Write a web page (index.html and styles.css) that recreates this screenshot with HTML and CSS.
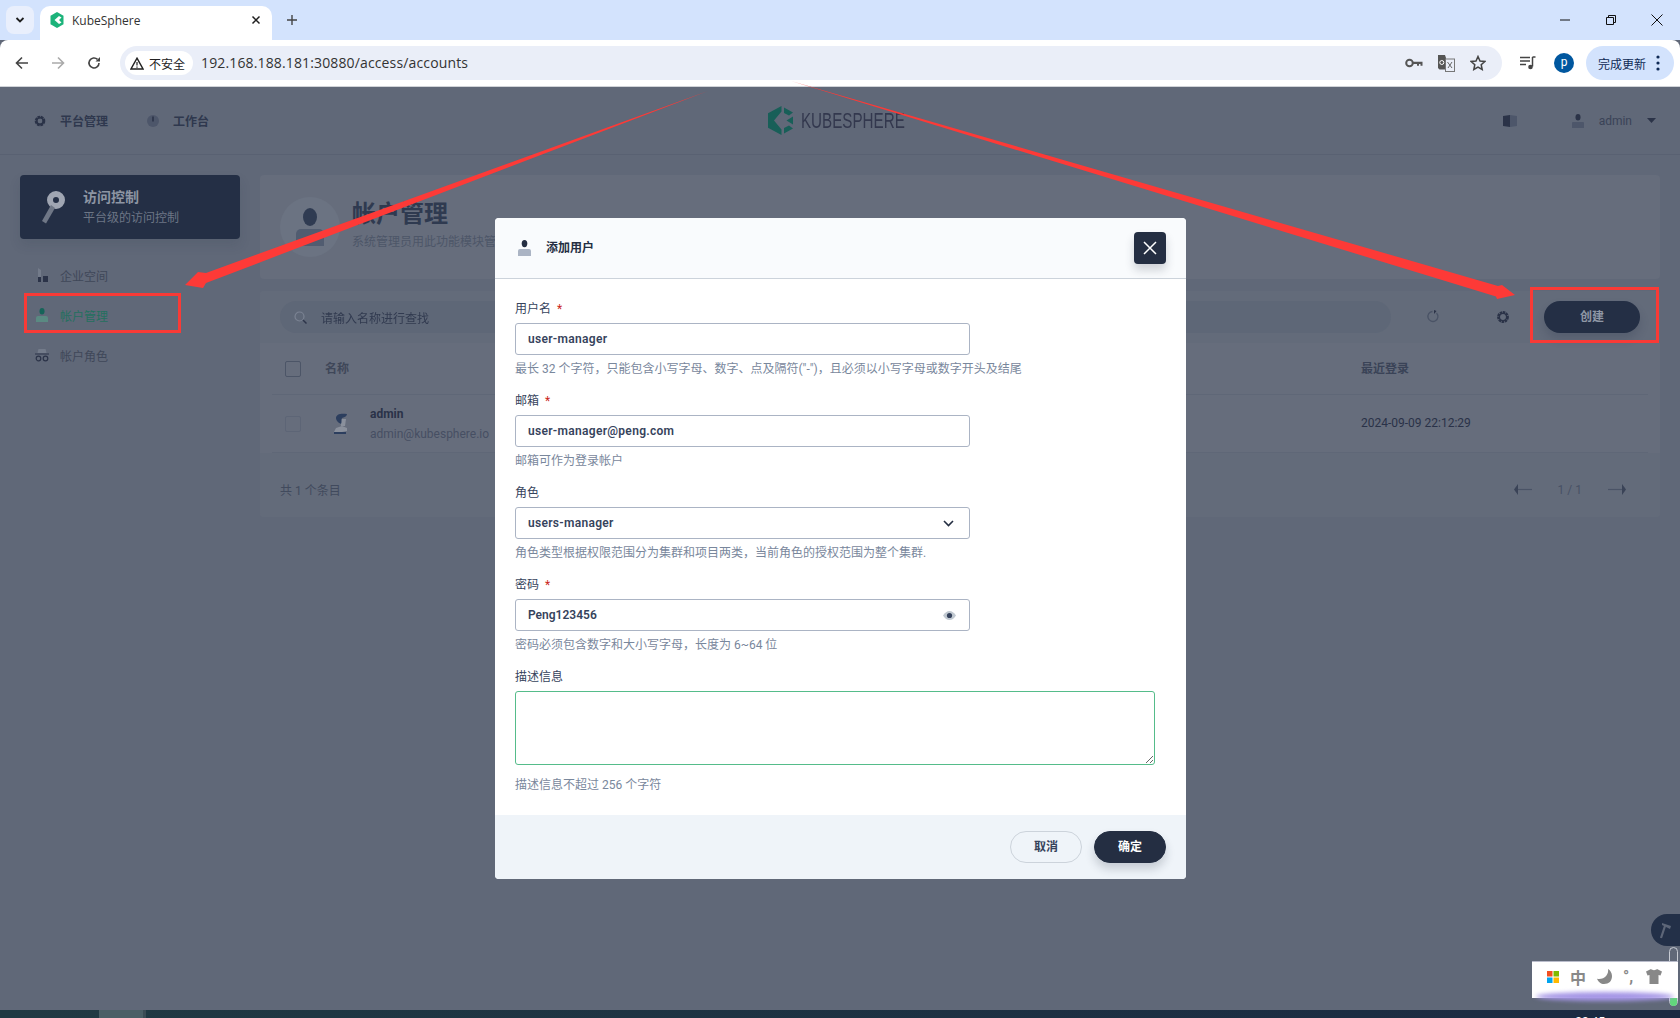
FILE: index.html
```html
<!DOCTYPE html>
<html lang="zh">
<head>
    <meta charset="UTF-8">
    <meta name="viewport" content="width=device-width, initial-scale=1.0">
    <title>KubeSphere</title>
    <link rel="stylesheet" href="styles.css">
</head>
<body>
    <!-- 浏览器外壳 -->
    <div class="tabstrip">
        <div class="tab-list-btn">
            <svg width="12" height="12" viewBox="0 0 12 12"><path d="M2.5 4l3.5 3.5L9.500 4" fill="none" stroke="#1f1f1f" stroke-width="1.800"/></svg>
        </div>
        <div class="tab">
            <svg class="tab-icon" width="14" height="16" viewBox="0 0 14 16"><path d="M7 0l6.500 3.800v8.400L7 16 .5 12.200V3.800z" fill="#1cb37a"/><path d="M9 4L4.500 8 9 12l2.500-1.500L9 8l2.500-2.500z" fill="#fff"/></svg>
            <span class="tab-title">KubeSphere</span>
            <svg class="tab-close" width="10" height="10" viewBox="0 0 10 10"><path d="M1.500 1.500l7 7M8.500 1.500l-7 7" stroke="#1f1f1f" stroke-width="1.500"/></svg>
        </div>
        <svg class="tab-new" width="12" height="12" viewBox="0 0 12 12"><path d="M6 1v10M1 6h10" stroke="#444" stroke-width="1.400"/></svg>
        <div class="window-controls">
            <svg width="12" height="12" viewBox="0 0 12 12"><path d="M1 6h10" stroke="#111" stroke-width="1"/></svg>
            <svg width="12" height="12" viewBox="0 0 12 12"><path d="M1.500 3.500h7v7h-7zM3.500 3.500v-2h7v7h-2" fill="none" stroke="#111" stroke-width="1"/></svg>
            <svg width="12" height="12" viewBox="0 0 12 12"><path d="M.5.5l11 11M11.500.5l-11 11" stroke="#111" stroke-width="1"/></svg>
        </div>
    </div>

    <div class="toolbar">
        <div class="nav-buttons">
            <svg width="14" height="14" viewBox="0 0 14 14"><path d="M13 7H2M7 1.500L1.500 7 7 12.500" fill="none" stroke="#444" stroke-width="1.600"/></svg>
            <svg width="14" height="14" viewBox="0 0 14 14"><path d="M1 7h11M7 1.500L12.500 7 7 12.500" fill="none" stroke="#aaa" stroke-width="1.600"/></svg>
            <svg width="14" height="14" viewBox="0 0 14 14"><path d="M12 7a5 5 0 1 1-1.500-3.600" fill="none" stroke="#444" stroke-width="1.600"/><path d="M13 1v4.500H8.500z" fill="#444"/></svg>
        </div>
        <div class="omnibox">
            <div class="chip">
                <svg width="14" height="13" viewBox="0 0 14 13"><path d="M7 1.200L13 12H1z" fill="none" stroke="#222" stroke-width="1.400"/><path d="M7 5v3.500M7 9.500v1.200" stroke="#222" stroke-width="1.200"/></svg>
                <span>不安全</span>
            </div>
            <span class="url">192.168.188.181:30880/access/accounts</span>
            <div class="omni-icons">
                <svg width="18" height="12" viewBox="0 0 18 12"><circle cx="4.500" cy="6" r="3.300" fill="none" stroke="#555" stroke-width="2"/><path d="M8 4.800h9.500v4h-2V7h-1.500v1.800h-2V7H8z" fill="#555"/></svg>
                <svg width="17" height="18" viewBox="0 0 17 18"><path d="M0 1h7l1 3v11.500H1.500L0 14z" fill="#555"/><rect x="7.500" y="5" width="9" height="12.500" fill="#eaeef8" stroke="#777"/><path d="M9.500 8l4.500 6M14 8l-4 6" stroke="#666"/><circle cx="3.800" cy="8.500" r="2" fill="none" stroke="#fff"/></svg>
                <svg width="16" height="16" viewBox="0 0 16 16"><path d="M8 1.500l2 4.500 4.800.5-3.600 3.200 1 4.800L8 12.100l-4.200 2.400 1-4.800L1.200 6.500 6 6z" fill="none" stroke="#444" stroke-width="1.500"/></svg>
            </div>
        </div>
        <svg class="media-icon" width="16" height="14" viewBox="0 0 16 14"><path d="M0 1.500h10M0 5h10M0 8.500h6" stroke="#444" stroke-width="1.500"/><path d="M12.500 1v9.500" stroke="#444" stroke-width="1.500"/><path d="M12.500 1H15.500" stroke="#444" stroke-width="1.500"/><circle cx="10.500" cy="11" r="2.300" fill="#444"/></svg>
        <div class="profile">p</div>
        <div class="update-pill">
            <span>完成更新</span>
            <svg width="4" height="16" viewBox="0 0 4 16"><circle cx="2" cy="2" r="1.600" fill="#0f2a55"/><circle cx="2" cy="8" r="1.600" fill="#0f2a55"/><circle cx="2" cy="14" r="1.600" fill="#0f2a55"/></svg>
        </div>
    </div>

    <!-- 页面（被遮罩压暗） -->
    <div class="page">
        <header class="app-header">
            <nav class="top-nav">
                <a class="top-link">
                    <svg width="14" height="14" viewBox="0 0 14 14"><circle cx="7" cy="7" r="4" fill="none" stroke="#2b3348" stroke-width="2.600" stroke-dasharray="2.600 .6"/><circle cx="7" cy="7" r="3.200" fill="none" stroke="#2b3348" stroke-width="1.500"/></svg>
                    <span>平台管理</span>
                </a>
                <a class="top-link">
                    <svg width="14" height="14" viewBox="0 0 14 14"><circle cx="7" cy="7" r="6" fill="#4d566a"/><path d="M7 2.500v5" stroke="#2b3348" stroke-width="1.600"/></svg>
                    <span>工作台</span>
                </a>
            </nav>
            <div class="logo">
                <svg width="26" height="29" viewBox="0 0 26 29"><path d="M13.500 0L0 7.300v14.400L13.500 29v-5.500L6 14.500l7.500-9z" fill="#185f58"/><path d="M16 1.500l9 5-4 3-5-2.500zM25 10.500v8l-6.500-4zM16 27.500l9-5-4-3-5 2.500z" fill="#185f58"/></svg>
                <span class="logo-text">KUBESPHERE</span>
            </div>
            <div class="top-right">
                <svg class="book-icon" width="14" height="12" viewBox="0 0 14 12"><path d="M0 1l7 -1v12l-7-1z" fill="#2b3348"/><path d="M7 0l7 1v10l-7 1z" fill="#4d566a"/></svg>
                <svg width="12" height="14" viewBox="0 0 12 14"><ellipse cx="6" cy="3.200" rx="2.500" ry="3.200" fill="#2b3348"/><path d="M1 8h10a1 1 0 0 1 1 1v5H0V9a1 1 0 0 1 1-1z" fill="#4d566a"/></svg>
                <span class="user-name">admin</span>
                <svg class="caret" width="9" height="5" viewBox="0 0 9 5"><path d="M0 0h9L4.500 5z" fill="#2b3348"/></svg>
            </div>
        </header>

        <div class="main">
            <aside class="sidebar">
                <div class="side-card">
                    <svg width="24" height="33" viewBox="0 0 24 33"><circle cx="15" cy="9" r="6" fill="none" stroke="#a0a6b2" stroke-width="6"/><path d="M10 14l4 3L5 32.500l-4-2.500z" fill="#6f7786"/></svg>
                    <div>
                        <div class="side-title">访问控制</div>
                        <div class="side-sub">平台级的访问控制</div>
                    </div>
                </div>
                <ul class="side-menu">
                    <li>
                        <svg width="14" height="14" viewBox="0 0 14 14"><path d="M3 0l3 2v12H3z" fill="#737b8a"/><rect x="3" y="9" width="3" height="5" fill="#2b3348"/><rect x="8" y="8" width="5" height="6" fill="#2b3348"/></svg>
                        <span>企业空间</span>
                    </li>
                    <li class="active">
                        <svg width="12" height="14" viewBox="0 0 12 14"><ellipse cx="6" cy="3.200" rx="2.500" ry="3.200" fill="#166459"/><path d="M2 8h8a2 2 0 0 1 2 2v4H0v-4a2 2 0 0 1 2-2z" fill="#5a8a82"/></svg>
                        <span>帐户管理</span>
                    </li>
                    <li>
                        <svg width="14" height="13" viewBox="0 0 14 13"><path d="M3.500 0h7l1 4h-9z" fill="#737b8a"/><path d="M0 5h14" stroke="#2b3348"/><circle cx="3.500" cy="9.500" r="2.300" fill="none" stroke="#2b3348" stroke-width="1.200"/><circle cx="10.500" cy="9.500" r="2.300" fill="none" stroke="#2b3348" stroke-width="1.200"/></svg>
                        <span>帐户角色</span>
                    </li>
                </ul>
            </aside>

            <section class="content">
                <div class="banner">
                    <div class="banner-icon">
                        <svg width="28" height="38" viewBox="0 0 28 38"><ellipse cx="14" cy="9" rx="7" ry="9" fill="#2f3b52"/><path d="M5 21h18a5 5 0 0 1 5 5v12H0V26a5 5 0 0 1 5-5z" fill="#515c70"/></svg>
                    </div>
                    <div>
                        <h1>帐户管理</h1>
                        <p>系统管理员用此功能模块管</p>
                    </div>
                </div>

                <div class="table-card">
                    <div class="table-toolbar">
                        <div class="search">
                            <svg width="13" height="13" viewBox="0 0 13 13"><circle cx="5.500" cy="5.500" r="4.500" fill="none" stroke="#7d8595" stroke-width="1.200"/><path d="M9 9l3.500 3.500" stroke="#2b3348" stroke-width="1.500"/></svg>
                            <span>请输入名称进行查找</span>
                        </div>
                        <svg class="tool-refresh" width="14" height="14" viewBox="0 0 14 14"><path d="M10.500 3a5 5 0 1 1-4-1.500" fill="none" stroke="#4a5366" stroke-width="1.300"/><path d="M8 0v4l2.500-3z" fill="#2b3348"/></svg>
                        <svg class="tool-gear" width="14" height="14" viewBox="0 0 14 14"><circle cx="7" cy="7" r="4.600" fill="none" stroke="#2b3348" stroke-width="2.600" stroke-dasharray="2.400 .6"/><circle cx="7" cy="7" r="3.600" fill="none" stroke="#2b3348" stroke-width="1.300"/></svg>
                        <div class="create-btn">创建</div>
                    </div>
                    <div class="table-head">
                        <span class="checkbox"></span>
                        <span class="col-name">名称</span>
                        <span class="col-login">最近登录</span>
                    </div>
                    <div class="table-row">
                        <span class="checkbox faint"></span>
                        <svg class="row-avatar" width="16" height="21" viewBox="0 0 16 21"><path d="M7 6h6l-1 7H8z" fill="#8a909c"/><path d="M3 15l6-2 5 2v3l-5 1H1z" fill="#8a909c"/><path d="M3 5C3 1 8 0 14 1c0 2-2 3-5 4-1 2 0 4-1 6-2-1-5-3-5-6z" fill="#2c3e5e"/><path d="M1 19h12v2H1z" fill="#2c3e5e"/></svg>
                        <div class="user-cell">
                            <div class="user-cell-name">admin</div>
                            <div class="user-cell-mail">admin@kubesphere.io</div>
                        </div>
                        <span class="col-login date">2024-09-09 22:12:29</span>
                    </div>
                    <div class="table-foot">
                        <span>共 1 个条目</span>
                        <div class="pager">
                            <svg width="18" height="11" viewBox="0 0 18 11"><path d="M4 5.500h14" stroke="#4a5366" stroke-width="1.200"/><path d="M4 0v11L0 5.500z" fill="#3a4357"/></svg>
                            <span>1 / 1</span>
                            <svg width="18" height="11" viewBox="0 0 18 11"><path d="M0 5.500h14" stroke="#4a5366" stroke-width="1.200"/><path d="M14 0v11l4-5.500z" fill="#3a4357"/></svg>
                        </div>
                    </div>
                </div>
            </section>
        </div>
    </div>

    <div class="taskbar">
        <div class="task-item"></div>
        <span class="task-clock">22:45</span>
    </div>

    <!-- 添加用户弹窗 -->
    <div class="modal">
        <div class="modal-header">
            <svg width="13" height="16" viewBox="0 0 13 16"><ellipse cx="6.500" cy="3.600" rx="2.800" ry="3.600" fill="#242e42"/><path d="M2 9h9a2 2 0 0 1 2 2v5H0v-5a2 2 0 0 1 2-2z" fill="#abb4c4"/></svg>
            <span class="modal-title">添加用户</span>
            <div class="modal-close">
                <svg width="14" height="14" viewBox="0 0 14 14"><path d="M1 1l12 12M13 1L1 13" stroke="#fff" stroke-width="1.500"/></svg>
            </div>
        </div>
        <form class="modal-body">
            <div class="form-item">
                <label>用户名<em>*</em></label>
                <input class="field" type="text" value="user-manager">
                <p class="hint">最长 32 个字符，只能包含小写字母、数字、点及隔符("-")，且必须以小写字母或数字开头及结尾</p>
            </div>
            <div class="form-item">
                <label>邮箱<em>*</em></label>
                <input class="field" type="text" value="user-manager@peng.com">
                <p class="hint">邮箱可作为登录帐户</p>
            </div>
            <div class="form-item">
                <label>角色</label>
                <div class="field select">
                    <span>users-manager</span>
                    <svg class="chevron" width="11" height="7" viewBox="0 0 11 7"><path d="M1 1l4.500 4.500L10 1" fill="none" stroke="#242e42" stroke-width="1.600"/></svg>
                </div>
                <p class="hint">角色类型根据权限范围分为集群和项目两类，当前角色的授权范围为整个集群.</p>
            </div>
            <div class="form-item">
                <label>密码<em>*</em></label>
                <div class="field select password">
                    <span>Peng123456</span>
                    <svg width="13" height="9" viewBox="0 0 13 9"><path d="M0 4.500C2 1.500 4 0 6.500 0S11 1.500 13 4.500C11 7.500 9 9 6.500 9S2 7.500 0 4.500z" fill="#c1c9d1"/><circle cx="6.500" cy="4.500" r="2.600" fill="#36435c"/></svg>
                </div>
                <p class="hint">密码必须包含数字和大小写字母，长度为 6~64 位</p>
            </div>
            <div class="form-item last">
                <label>描述信息</label>
                <textarea class="desc"></textarea>
                <p class="hint">描述信息不超过 256 个字符</p>
            </div>
        </form>
        <div class="modal-footer">
            <div class="btn btn-cancel">取消</div>
            <div class="btn btn-ok">确定</div>
        </div>
    </div>

    <!-- 截图上画的红框和箭头 -->
    <svg class="marks" width="1680" height="1018" viewBox="0 0 1680 1018">
        <polygon points="708,91 206,273 198,272 185,285 203,288 206,283" fill="#fd3a37"/>
        <polygon points="791,81 1498,286 1502,285 1515,295 1497,299 1496,296.500" fill="#fd3a37"/>
        <rect x="25.500" y="294.500" width="154" height="37" fill="none" stroke="#f93a36" stroke-width="3"/>
        <rect x="1531.500" y="288.500" width="126" height="53" fill="none" stroke="#f93a36" stroke-width="3"/>
    </svg>

    <!-- 右下角悬浮的工具和输入法 -->
    <div class="float-tool">
        <svg width="14" height="18" viewBox="0 0 14 18"><path d="M6 5L2 17" stroke="#5d6678" stroke-width="2.200"/><path d="M3 2l9 3-1 3-8-4z" fill="#5d6678"/></svg>
    </div>
    <div class="float-slot"></div>
    <div class="float-green"></div>
    <div class="ime-bar">
        <svg width="12" height="12" viewBox="0 0 12 12"><rect width="5.500" height="5.500" fill="#f25022"/><rect x="6.500" width="5.500" height="5.500" fill="#7fba00"/><rect y="6.500" width="5.500" height="5.500" fill="#00a4ef"/><rect x="6.500" y="6.500" width="5.500" height="5.500" fill="#ffb900"/></svg>
        <span class="ime-zh">中</span>
        <svg width="15" height="15" viewBox="0 0 15 15"><path d="M11 0c1 5-3 10-9 10-1 0-1.500 0-2-.5C1 13 4 15 7 15c5 0 8-3 8-8 0-3-2-6-4-7z" fill="#888"/></svg>
        <span class="ime-punct">°,</span>
        <svg width="16" height="15" viewBox="0 0 16 15"><path d="M5 0C6 1.500 10 1.500 11 0l5 2.500-1.500 4-2-.5v9h-9V6l-2 .5L0 2.500z" fill="#888"/></svg>
    </div>
</body>
</html>
```

FILE: styles.css
```css
html, body {
    margin: 0;
    padding: 0;
}

body {
    position: relative;
    width: 1680px;
    height: 1018px;
    overflow: hidden;
    font-family: Roboto, "Noto Sans CJK SC", sans-serif;
    font-size: 12px;
    background: #606878;
}

/* 浏览器外壳 */
.tabstrip {
    display: flex;
    align-items: flex-end;
    height: 40px;
    background: #d3e3fd;
}

.tab-list-btn {
    display: flex;
    align-items: center;
    justify-content: center;
    width: 28px;
    height: 28px;
    margin: 0 6px 6px 6px;
    background: #e9effc;
    border-radius: 8px;
}

.tab {
    display: flex;
    align-items: center;
    width: 232px;
    height: 34px;
    box-sizing: border-box;
    padding: 0 11px 6px 10px;
    background: #fff;
    border-radius: 10px 10px 0 0;
}

.tab-title {
    flex: 1;
    margin-left: 8px;
    font-family: "Open Sans", "Noto Sans", sans-serif;
    font-size: 12px;
    color: #333;
}

.tab-new {
    margin: 0 0 14px 14px;
}

.window-controls {
    display: flex;
    gap: 34px;
    margin: 0 17px 14px auto;
}

.toolbar {
    display: flex;
    align-items: center;
    height: 46px;
    background: #fff;
    border-radius: 8px 8px 0 0;
    border-bottom: 1px solid #d0d3d8;
}

.nav-buttons {
    display: flex;
    gap: 22px;
    margin-left: 15px;
    width: 105px;
}

.omnibox {
    display: flex;
    align-items: center;
    width: 1382px;
    height: 34px;
    box-sizing: border-box;
    padding-left: 5px;
    background: #eaeef8;
    border-radius: 17px;
}

.chip {
    display: flex;
    align-items: center;
    gap: 5px;
    width: 68px;
    height: 24px;
    box-sizing: border-box;
    padding-left: 5px;
    background: #fff;
    border-radius: 12px;
    font-size: 12px;
    color: #222;
}

.url {
    margin: 0 0 2px 8px;
    font-family: "Open Sans", "Noto Sans", sans-serif;
    font-size: 14px;
    color: #333;
    letter-spacing: 0.14px;
}

.omni-icons {
    display: flex;
    align-items: center;
    gap: 15px;
    margin: 0 16px 0 auto;
}

.media-icon {
    margin-left: 18px;
}

.profile {
    width: 20px;
    height: 20px;
    margin-left: 18px;
    background: #00579f;
    border-radius: 50%;
    color: #fff;
    font-size: 12px;
    line-height: 18px;
    text-align: center;
}

.update-pill {
    display: flex;
    align-items: center;
    gap: 10px;
    width: 88px;
    height: 34px;
    box-sizing: border-box;
    margin-left: 12px;
    padding-left: 12px;
    background: #d3e3fd;
    border-radius: 17px;
    color: #0f2a55;
}

/* 页面 */
.page {
    height: 923px;
}

.app-header {
    position: relative;
    display: flex;
    align-items: center;
    justify-content: space-between;
    height: 67px;
    border-bottom: 1px solid #596172;
}

.top-nav {
    display: flex;
    gap: 38px;
    margin-left: 33px;
}

.top-link {
    display: flex;
    align-items: center;
    gap: 13px;
    font-weight: 700;
    color: #2f384e;
}

.logo {
    position: absolute;
    left: 768px;
    top: 19px;
    display: flex;
    align-items: center;
    gap: 7px;
}

.logo-text {
    font-family: "Liberation Sans", sans-serif;
    font-size: 22px;
    font-weight: 400;
    color: #33384e;
    transform: scaleX(0.69);
    transform-origin: left center;
}

.top-right {
    display: flex;
    align-items: center;
    margin-right: 24px;
}

.book-icon {
    margin-right: 55px;
}

.user-name {
    margin: 0 15px 0 15px;
    color: #3a4357;
}

.main {
    display: flex;
    padding: 20px 20px 0 20px;
    gap: 20px;
}

.sidebar {
    width: 220px;
}

.side-card {
    display: flex;
    align-items: center;
    gap: 18px;
    height: 64px;
    box-sizing: border-box;
    padding-left: 21px;
    background: #242f45;
    border-radius: 4px;
    box-shadow: 0 6px 12px rgba(36, 47, 69, 0.12);
}

.side-title {
    font-size: 14px;
    font-weight: 700;
    line-height: 20px;
    color: #8d95a3;
}

.side-sub {
    margin-top: 1px;
    line-height: 20px;
    color: #6d7685;
}

.side-menu {
    list-style: none;
    margin: 16px 0 0 0;
    padding: 0;
}

.side-menu li {
    display: flex;
    align-items: center;
    height: 40px;
    padding-left: 15px;
    color: #3f4759;
}

.side-menu li svg {
    width: 14px;
    margin-right: 11px;
}

.side-menu li.active {
    color: #24705f;
}

.content {
    width: 1400px;
}

.banner {
    display: flex;
    align-items: flex-start;
    gap: 12px;
    height: 104px;
    box-sizing: border-box;
    padding: 22px 0 0 20px;
    background: #666d7c;
    border-radius: 4px;
}

.banner-icon {
    display: flex;
    align-items: center;
    justify-content: center;
    width: 60px;
    height: 60px;
    flex: none;
    background: #6b7382;
    border-radius: 50%;
}

.banner h1 {
    margin: 0;
    font-size: 24px;
    line-height: 35px;
    font-weight: 700;
    color: #2f3a50;
}

.banner p {
    margin: 0;
    line-height: 20px;
    color: #4d5668;
}

.table-card {
    margin-top: 12px;
    background: #666d7c;
    border-radius: 4px;
}

.table-toolbar {
    display: flex;
    align-items: center;
    height: 52px;
    padding: 0 20px;
    background: #636b7a;
    border-radius: 4px 4px 0 0;
}

.search {
    display: flex;
    align-items: center;
    gap: 14px;
    width: 1111px;
    height: 32px;
    box-sizing: border-box;
    padding-left: 14px;
    background: #5e6777;
    border-radius: 16px;
    color: #2f384e;
    opacity: 0.95;
}

.tool-refresh {
    margin-left: 35px;
}

.tool-gear {
    margin-left: 56px;
}

.create-btn {
    width: 96px;
    height: 32px;
    margin-left: 34px;
    background: #242f45;
    border-radius: 16px;
    box-shadow: 0 6px 10px rgba(36, 47, 69, 0.2);
    color: #8f97a5;
    font-weight: 700;
    line-height: 32px;
    text-align: center;
}

.table-head, .table-row {
    position: relative;
    display: flex;
    align-items: center;
    margin: 0 12px;
    border-bottom: 1px solid #5f6777;
}

.table-head {
    height: 48px;
    padding-bottom: 3px;
    font-weight: 700;
    color: #3a4357;
}

.table-row {
    height: 57px;
}

.checkbox {
    width: 14px;
    height: 14px;
    margin-left: 13px;
    border: 1px solid #4c5567;
    border-radius: 2px;
    background: #666d7c;
}

.table-head .checkbox {
    margin-top: 4px;
}

.checkbox.faint {
    border-color: #5d6576;
}

.col-name {
    margin-left: 24px;
    color: #3f4759;
}

.col-login {
    position: absolute;
    left: 1089px;
    color: #3a4357;
}

.col-login.date {
    margin-top: -2px;
    font-weight: 400;
    color: #2a3248;
}

.row-avatar {
    margin-left: 32px;
}

.user-cell {
    margin-left: 21px;
}

.user-cell-name {
    font-weight: 700;
    line-height: 20px;
    color: #2a3248;
}

.user-cell-mail {
    line-height: 20px;
    color: #464f63;
}

.table-foot {
    display: flex;
    align-items: center;
    justify-content: space-between;
    height: 64px;
    box-sizing: border-box;
    padding: 9px 34px 0 20px;
    background: #636b7a;
    border-radius: 0 0 4px 4px;
    color: #414a5d;
}

.pager {
    display: flex;
    align-items: center;
    gap: 26px;
    color: #485165;
}

.taskbar {
    position: relative;
    height: 8px;
    overflow: hidden;
    background: linear-gradient(90deg, #203a43, #1b2a42);
}

.task-item {
    width: 44px;
    height: 8px;
    margin-left: 99px;
    background: #4a5f66;
    border-right: 3px solid #3a4c55;
}

.task-clock {
    position: absolute;
    left: 1575px;
    top: 5px;
    color: #fff;
    font-size: 12px;
    line-height: 14px;
}

/* 弹窗 */
.modal {
    position: absolute;
    left: 495px;
    top: 218px;
    width: 691px;
    background: #fff;
    border-radius: 4px;
}

.modal-header {
    display: flex;
    align-items: center;
    height: 60px;
    padding: 0 20px 0 23px;
    background: #f9fbfd;
    border-bottom: 1px solid #ccd3db;
    border-radius: 4px 4px 0 0;
}

.modal-title {
    margin: 0 0 3px 15px;
    font-weight: 700;
    color: #242e42;
}

.modal-close {
    display: flex;
    align-items: center;
    justify-content: center;
    width: 32px;
    height: 32px;
    margin-left: auto;
    background: #242e42;
    border-radius: 4px;
    box-shadow: 0 6px 10px rgba(36, 46, 66, 0.2);
}

.modal-body {
    padding: 20px 31px 20px 20px;
}

.form-item {
    margin-bottom: 12px;
}

.form-item.last {
    margin-bottom: 0;
}

.form-item label {
    display: block;
    margin-bottom: 4px;
    line-height: 20px;
    color: #36435c;
}

.form-item label em {
    margin-left: 6px;
    font-style: normal;
    color: #ca2621;
}

.field {
    display: block;
    width: 455px;
    height: 32px;
    box-sizing: border-box;
    padding: 0 12px;
    border: 1px solid #abb4c4;
    border-radius: 3px;
    outline: none;
    background: #fff;
    font-family: Roboto, "Noto Sans CJK SC", sans-serif;
    font-size: 12px;
    font-weight: 600;
    letter-spacing: 0.3px;
    color: #36435c;
}

.select {
    display: flex;
    align-items: center;
    justify-content: space-between;
}

.select svg {
    margin-right: 1px;
}

.select .chevron {
    margin-right: 3px;
}

.password {
    letter-spacing: 0;
}

.hint {
    margin: 4px 0 0 0;
    line-height: 20px;
    color: #79879c;
}

.desc {
    display: block;
    width: 640px;
    height: 74px;
    box-sizing: border-box;
    border: 1px solid #55bc8a;
    border-radius: 3px;
    outline: none;
    background: #fff;
}

.last .hint {
    margin-top: 10px;
}

.modal-footer {
    display: flex;
    justify-content: flex-end;
    gap: 12px;
    height: 64px;
    box-sizing: border-box;
    padding: 16px 20px;
    background: #eff4f9;
    border-radius: 0 0 4px 4px;
}

.btn {
    width: 72px;
    height: 32px;
    box-sizing: border-box;
    border-radius: 16px;
    font-weight: 700;
    line-height: 30px;
    text-align: center;
}

.btn-cancel {
    border: 1px solid #ccd3db;
    color: #36435c;
}

.btn-ok {
    background: #242e42;
    border: 1px solid #242e42;
    box-shadow: 0 6px 10px rgba(36, 46, 66, 0.2);
    color: #fff;
}

/* 标注 */
.marks {
    position: absolute;
    left: 0;
    top: 0;
    pointer-events: none;
}

/* 悬浮 */
.float-tool {
    position: absolute;
    right: 0;
    top: 914px;
    display: flex;
    align-items: center;
    justify-content: center;
    width: 29px;
    height: 32px;
    background: #233048;
    border-radius: 16px 0 0 16px;
}

.float-slot {
    position: absolute;
    left: 1669px;
    top: 947px;
    width: 9px;
    height: 59px;
    box-sizing: border-box;
    border: 1px solid #c8ccd4;
    border-radius: 5px;
}

.float-green {
    position: absolute;
    left: 1670px;
    top: 997px;
    width: 7px;
    height: 9px;
    background: #62d77c;
    border-radius: 0 0 4px 4px;
}

.ime-bar {
    position: absolute;
    left: 1532px;
    top: 961px;
    display: flex;
    align-items: center;
    gap: 11px;
    width: 146px;
    height: 37px;
    box-sizing: border-box;
    padding: 0 0 7px 15px;
    border-top: 1px solid #b9bccb;
    background: #fff;
}

/* 输入法条底部的紫色光晕 */
.ime-bar::after {
    content: "";
    position: absolute;
    left: 4px;
    right: 4px;
    bottom: -3px;
    height: 9px;
    background: #a596e6;
    border-radius: 50%;
    filter: blur(2px);
}

.ime-zh {
    font-size: 16px;
    font-weight: 700;
    color: #888;
}

.ime-punct {
    width: 12px;
    font-size: 16px;
    font-weight: 700;
    color: #888;
}
```
